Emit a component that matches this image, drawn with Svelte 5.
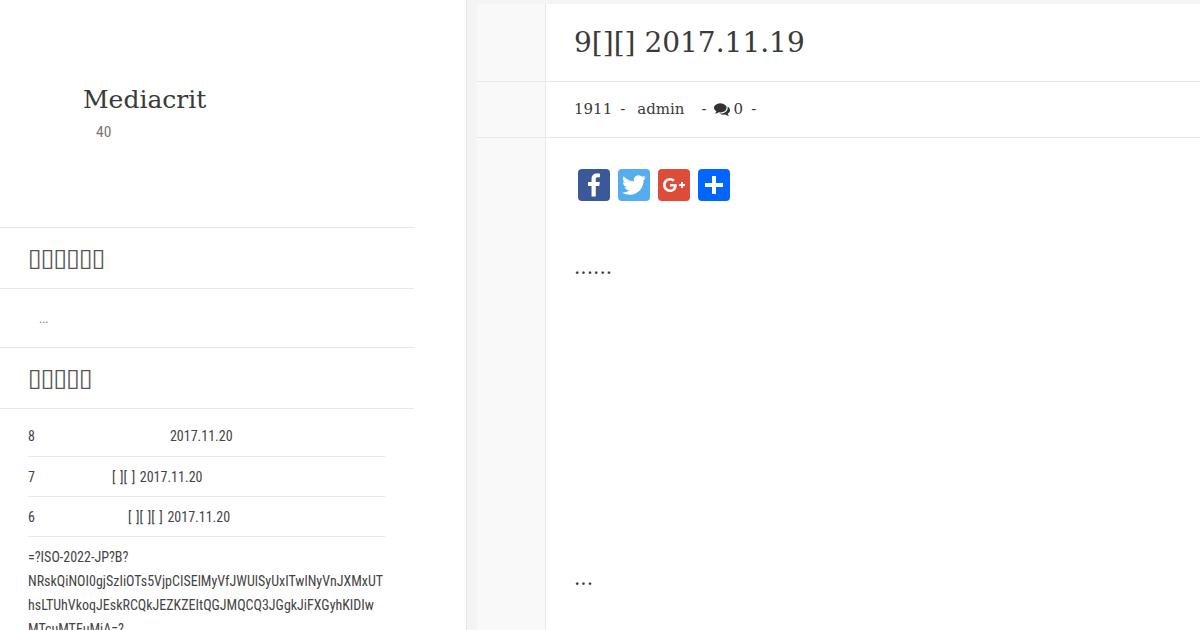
<script>
    const recent = [
        { num: '8', rest: '2017.11.20', gap: 'gap-a' },
        { num: '7', rest: '[ ][ ] 2017.11.20', gap: 'gap-b' },
        { num: '6', rest: '[ ][ ][ ] 2017.11.20', gap: 'gap-c' }
    ];
</script>

<div class="page">
    <aside class="side">
        <div class="side-inner">
            <header class="brand">
                <div class="brand-name">Mediacrit</div>
                <div class="brand-sub">40</div>
            </header>
            <h3 class="widget-title">▯▯▯▯▯▯</h3>
            <div class="widget-body">...</div>
            <h3 class="widget-title">▯▯▯▯▯</h3>
            <ul class="list">
                {#each recent as item}
                    <li><span>{item.num}</span><span class={item.gap}>{item.rest}</span></li>
                {/each}
                <li class="long">=?ISO-2022-JP?B?<br />NRskQiNOI0gjSzIiOTs5VjpCISElMyVfJWUlSyUxITwlNyVnJXMxUT<br />hsLTUhVkoqJEskRCQkJEZKZEItQGJMQCQ3JGgkJiFXGyhKIDIw<br />MTcuMTEuMjA=?</li>
            </ul>
        </div>
    </aside>

    <main class="main">
        <article class="post">
            <div class="row title-row"><h1>9[][] 2017.11.19</h1></div>
            <div class="row meta-row">
                <div class="meta">
                    <span>1911</span><span class="dash">-</span><span>admin</span><span class="dash wide">-</span>
                    <svg class="comments" viewBox="0 0 1792 1792"><path d="M1408 768q0 139-94 257t-256.500 186.500-353.500 68.500q-86 0-176-16-124 88-278 128-36 9-86 16h-3q-11 0-20.500-8t-11.500-21q-1-3-1-6.500t.5-6.500 2-6l2.500-5 3.500-5.500 4-5 4.500-5 4-4.500q5-6 23-25t26-29.500 22.500-29 25-38.500 20.500-44q-124-72-195-177t-71-224q0-139 94-257t256.500-186.500 353.500-68.500 353.500 68.500 256.500 186.500 94 257zm384 256q0 120-71 224.500t-195 176.500q10 24 20.500 44t25 38.500 22.500 29 26 29.500 23 25q1 1 4 4.500t4.500 5 4 5 3.500 5.500l2.500 5 2 6 .5 6.500-1 6.500q-3 14-13 22t-22 7q-50-7-86-16-154-40-278-128-90 16-176 16-271 0-472-132 58 4 88 4 161 0 309-45t264-129q125-92 192-212t67-254q0-77-23-152 129 71 204 178t75 230z" /></svg>
                    <span>0</span><span class="dash">-</span>
                </div>
            </div>
            <div class="row body-row">
                <div class="body">
                    <div class="share">
                        <svg viewBox="0 0 32 32"><rect width="32" height="32" rx="4" fill="#3b5998" /><path fill="#fff" d="M17.78 27.500V17.008h3.522l.527-4.090h-4.050v-2.610c0-1.182.33-1.990 2.023-1.990h2.166V4.660c-.375-.05-1.660-.16-3.155-.16-3.123 0-5.260 1.905-5.260 5.405v3.016h-3.530v4.090h3.530V27.500h4.223z" /></svg>
                        <svg viewBox="0 0 32 32"><rect width="32" height="32" rx="4" fill="#55acee" /><path fill="#fff" d="M28 8.557a9.913 9.913 0 0 1-2.828.775 4.930 4.930 0 0 0 2.166-2.725 9.738 9.738 0 0 1-3.130 1.194 4.920 4.920 0 0 0-3.593-1.550 4.924 4.924 0 0 0-4.794 6.049c-4.090-.21-7.720-2.170-10.150-5.150a4.942 4.942 0 0 0-.665 2.477c0 1.710.870 3.214 2.190 4.100a4.968 4.968 0 0 1-2.230-.616v.06c0 2.390 1.700 4.380 3.952 4.830-.414.115-.85.174-1.297.174-.318 0-.626-.03-.928-.086a4.935 4.935 0 0 0 4.600 3.420 9.893 9.893 0 0 1-6.114 2.107c-.398 0-.79-.023-1.175-.068a13.953 13.953 0 0 0 7.550 2.213c9.056 0 14.010-7.507 14.010-14.013 0-.213-.005-.426-.015-.637.96-.695 1.795-1.560 2.455-2.550z" /></svg>
                        <svg viewBox="0 0 32 32"><rect width="32" height="32" rx="4" fill="#dd4b39" /><path fill="#fff" d="M27 15h-2v-2h-2v2h-2v2h2v2h2v-2h2m-15-2v2.400h3.970c-.16 1.030-1.200 3.020-3.970 3.020-2.390 0-4.340-1.980-4.340-4.420s1.950-4.420 4.340-4.420c1.360 0 2.270.58 2.790 1.080l1.900-1.830C15.470 9.690 13.890 9 12 9c-3.870 0-7 3.130-7 7s3.130 7 7 7c4.040 0 6.720-2.840 6.720-6.840 0-.46-.05-.81-.11-1.160H12z" /></svg>
                        <svg viewBox="0 0 32 32"><rect width="32" height="32" rx="4" fill="#0166ff" /><path fill="#fff" d="M14 7h4v18h-4z M7 14h18v4H7z" /></svg>
                    </div>
                    <p class="para first">......</p>
                    <p class="para second">...</p>
                </div>
            </div>
        </article>
    </main>
</div>

<style>
    :global(body) {
        margin: 0;
        background: #fff;
        overflow: hidden;
    }

    .page {
        display: flex;
        width: 1200px;
        height: 630px;
        overflow: hidden;
        font-family: "DejaVu Serif", serif;
        color: #3a3a3a;
    }

    .side {
        width: 467px;
        flex-shrink: 0;
        box-sizing: border-box;
        border-right: 1px solid #e8e8e8;
    }

    .side-inner {
        width: 414px;
    }

    .brand {
        height: 227px;
        box-sizing: border-box;
        padding: 85px 0 0 83px;
    }

    .brand-name {
        font-size: 25px;
        line-height: 30px;
    }

    .brand-sub {
        margin: 7px 0 0 13px;
        font-family: "Roboto Condensed", Roboto, sans-serif;
        font-stretch: condensed;
        font-size: 15.5px;
        line-height: 20px;
        color: #777;
    }

    .widget-title {
        margin: 0;
        height: 60px;
        padding-left: 28px;
        border-top: 1px solid #e8e8e8;
        border-bottom: 1px solid #e8e8e8;
        font-size: 25px;
        font-weight: 400;
        letter-spacing: -1px;
        line-height: 60px;
        color: #555;
    }

    .widget-body {
        height: 58px;
        padding-left: 39px;
        font-family: Roboto, sans-serif;
        font-size: 12px;
        line-height: 60px;
        color: #777;
    }

    .list {
        list-style: none;
        margin: 0;
        padding: 7px 29px 0 28px;
        font-family: "Roboto Condensed", Roboto, sans-serif;
        font-stretch: condensed;
        font-size: 14px;
        line-height: 24px;
        color: #444;
    }

    .list li {
        padding: 8px 0 7px;
        border-bottom: 1px solid #e8e8e8;
    }

    .list li:first-child {
        padding-bottom: 8px;
    }

    .list li.long {
        padding-top: 8px;
        border: 0;
    }

    .gap-a {
        margin-left: 135px;
    }

    .gap-b {
        margin-left: 77px;
        word-spacing: 1.4px;
    }

    .gap-c {
        margin-left: 93px;
        word-spacing: 1.4px;
    }

    .main {
        flex: 1;
        background: #f4f4f4;
        padding: 4px 0 0 10px;
    }

    .post {
        background: #fff;
        height: 100%;
    }

    .row {
        padding-left: 68px;
        background: linear-gradient(#f9f9f9, #f9f9f9) no-repeat left / 68px 100%;
    }

    .title-row,
    .meta-row {
        border-bottom: 1px solid #e8e8e8;
    }

    .title-row h1 {
        margin: 0;
        height: 77px;
        padding-left: 28px;
        border-left: 1px solid #e8e8e8;
        font-size: 28px;
        font-weight: 400;
        line-height: 78px;
    }

    .meta {
        display: flex;
        align-items: center;
        height: 54px;
        padding: 0 0 1px 28px;
        border-left: 1px solid #e8e8e8;
        font-size: 15px;
    }

    .dash {
        margin: 0 12px 0 8px;
    }

    .dash.wide {
        margin: 0 7px 0 17px;
    }

    .comments {
        width: 16px;
        height: 16px;
        margin-right: 4px;
        fill: #333;
    }

    .body-row {
        height: 500px;
    }

    .body {
        height: 100%;
        padding-left: 28px;
        border-left: 1px solid #e8e8e8;
    }

    .share {
        display: flex;
        gap: 8px;
        padding: 31px 0 0 4px;
    }

    .share svg {
        width: 32px;
        height: 32px;
    }

    .para {
        margin: 0;
        font-size: 20px;
        line-height: 30px;
    }

    .first {
        margin-top: 51px;
    }

    .second {
        margin-top: 281px;
    }
</style>
